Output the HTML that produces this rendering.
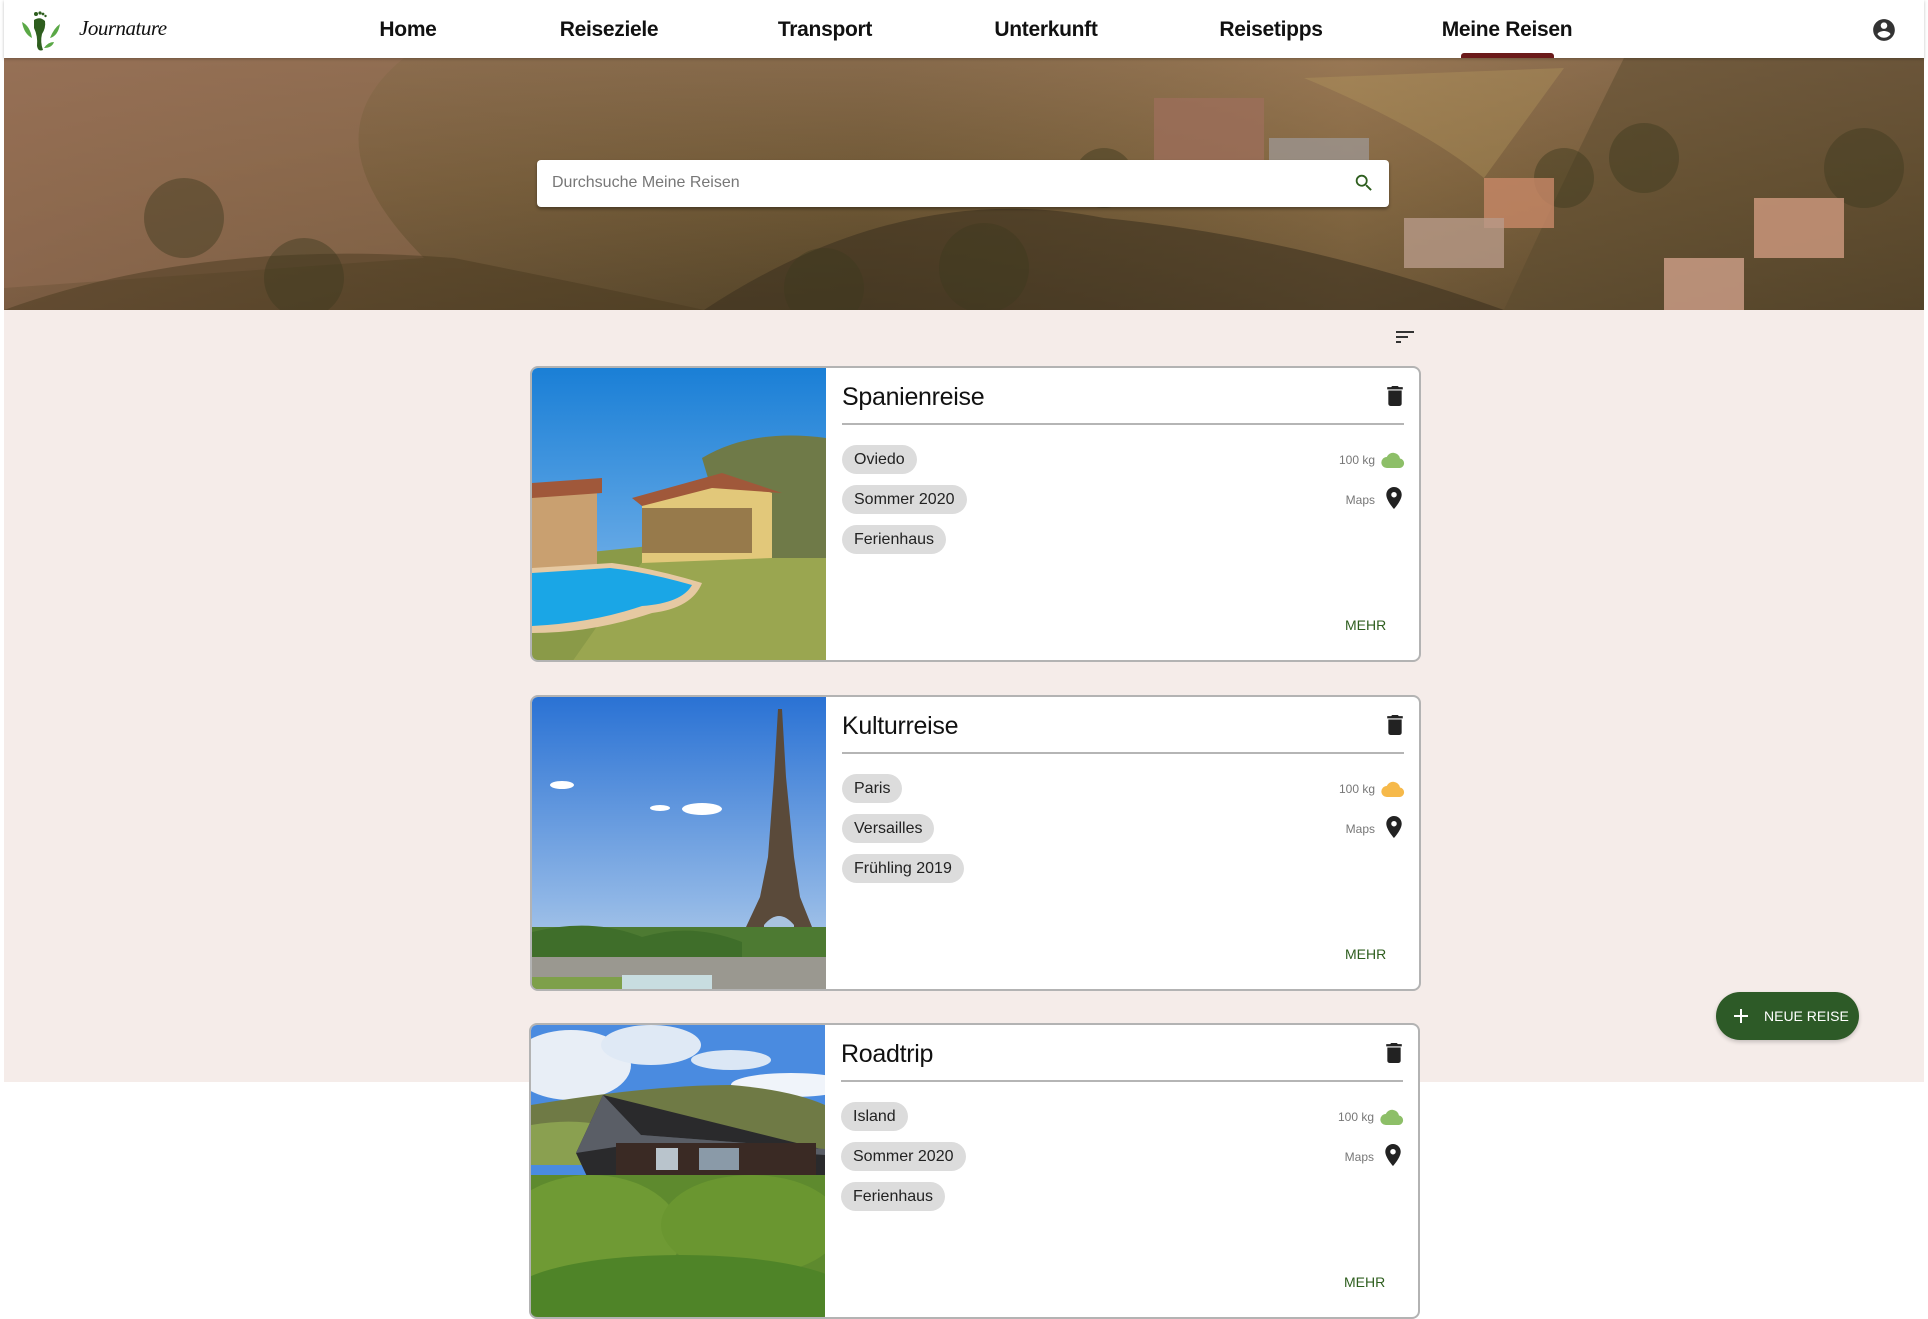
<!DOCTYPE html>
<html><head><meta charset="utf-8">
<style>
*{box-sizing:border-box;margin:0;padding:0}
body{width:1928px;height:1318px;overflow:hidden;background:#fff;font-family:"Liberation Sans",sans-serif;position:relative}
.nav{position:absolute;left:4px;top:0;width:1920px;height:58px;background:#fff;box-shadow:0 1px 3px rgba(0,0,0,.25);z-index:3}
.nav a{position:absolute;top:18px;font-size:21px;color:#111;transform:translateX(-50%);white-space:nowrap;font-weight:bold;letter-spacing:-.3px}
.hero{position:absolute;left:4px;top:58px;width:1920px;height:252px;overflow:hidden}
.beige{position:absolute;left:4px;top:310px;width:1920px;height:772px;background:#f5ece9}
.search{position:absolute;left:537px;top:160px;width:852px;height:47px;background:#fff;border-radius:4px;box-shadow:0 2px 3px rgba(0,0,0,.35);z-index:2}
.search span{position:absolute;left:15px;top:14px;font-size:16px;color:#777}
.card{position:absolute;width:891px;height:296px;border:2px solid #b3b3b3;border-radius:8px;background:#fff;overflow:hidden;z-index:2}
.card .img{position:absolute;left:0;top:0;width:294px;height:294px;overflow:hidden}
.card h2{position:absolute;left:310px;top:15px;font-size:25px;font-weight:400;color:#111;letter-spacing:-.3px}
.card .line{position:absolute;left:310px;top:55px;width:562px;height:2px;background:#b5b5b5}
.chip{position:absolute;left:310px;height:29px;line-height:29px;padding:0 12px;background:#dcdcdc;border-radius:15px;font-size:16px;color:#222}
.rt{position:absolute;right:44px;font-size:12px;color:#777}
.ic{position:absolute;right:14px}
.mehr{position:absolute;left:813px;top:249px;font-size:14px;color:#2e5e1e}
.fab{position:absolute;left:1716px;top:992px;width:143px;height:48px;border-radius:24px;background:#2d5a27;color:#fff;font-size:14px;z-index:2;box-shadow:0 2px 4px rgba(0,0,0,.2)}
</style></head><body>
<div class="nav">
 <svg style="position:absolute;left:16px;top:10px" width="44" height="42" viewBox="0 0 44 42">
  <path d="M2 12 Q10 16 12 28 Q4 24 2 12Z" fill="#5aa846"/>
  <path d="M40 14 Q34 18 30 28 Q38 26 40 14Z" fill="#5aa846"/>
  <path d="M34 32 Q28 32 24 38 Q32 38 34 32Z" fill="#5aa846"/>
  <path d="M14 10 Q20 6 25 11 Q26 18 22 24 Q20 32 23 40 Q18 42 17 36 Q18 26 14 18Z" fill="#2e5e1e"/>
  <circle cx="16" cy="4" r="2" fill="#2e5e1e"/><circle cx="20" cy="3" r="1.6" fill="#2e5e1e"/><circle cx="23" cy="4" r="1.4" fill="#2e5e1e"/><circle cx="25.5" cy="6" r="1.2" fill="#2e5e1e"/>
 </svg>
 <div style="position:absolute;left:75px;top:16px;font-family:'Liberation Serif',serif;font-style:italic;font-size:21px;color:#111;letter-spacing:-.5px">Journature</div>
 <a style="left:404px">Home</a>
 <a style="left:605px">Reiseziele</a>
 <a style="left:821px">Transport</a>
 <a style="left:1042px">Unterkunft</a>
 <a style="left:1267px">Reisetipps</a>
 <a style="left:1503px">Meine Reisen</a>
 <div style="position:absolute;left:1457px;top:53px;width:93px;height:5px;background:#6b1a1a;border-radius:3px 3px 0 0"></div>
 <svg style="position:absolute;left:1867px;top:17px" width="26" height="26" viewBox="0 0 24 24"><path fill="#333" d="M12 2C6.48 2 2 6.48 2 12s4.48 10 10 10 10-4.48 10-10S17.52 2 12 2zm0 3c1.66 0 3 1.340 3 3s-1.34 3-3 3-3-1.34-3-3 1.34-3 3-3zm0 14.2c-2.5 0-4.71-1.28-6-3.220.03-1.99 4-3.08 6-3.08 1.99 0 5.97 1.09 6 3.08-1.29 1.94-3.5 3.22-6 3.22z"/></svg>
</div>

<div class="hero">
<svg width="1920" height="252" viewBox="0 0 1920 252" preserveAspectRatio="none">
 <defs>
  <linearGradient id="hg" x1="0" y1="0" x2="0" y2="1"><stop offset="0" stop-color="#8a6a4e"/><stop offset=".5" stop-color="#6d5433"/><stop offset="1" stop-color="#4a3a22"/></linearGradient>
  <linearGradient id="hl" x1="0" y1="0" x2="1" y2="0"><stop offset="0" stop-color="#9b7358" stop-opacity=".6"/><stop offset=".45" stop-color="#7a6a40" stop-opacity=".2"/><stop offset=".7" stop-color="#b39060" stop-opacity=".35"/><stop offset="1" stop-color="#5a4a30" stop-opacity=".3"/></linearGradient>
 </defs>
 <rect width="1920" height="252" fill="url(#hg)"/>
 <rect width="1920" height="252" fill="url(#hl)"/>
 <path d="M0 0 L400 0 Q300 80 420 200 L0 230Z" fill="#9a7258" opacity=".45"/>
 <path d="M1620 0 L1920 0 L1920 252 L1500 252 Q1560 120 1620 0Z" fill="#5a4a2e" opacity=".5"/>
 <path d="M700 252 Q900 120 1100 160 Q1300 180 1500 252Z" fill="#3d3220" opacity=".6"/>
 <path d="M0 252 Q200 180 450 200 Q600 230 700 252Z" fill="#4a3a20" opacity=".5"/>
 <path d="M1300 20 Q1420 70 1480 120 L1560 10Z" fill="#b79a5e" opacity=".35"/>
 <g fill="#3e3a1e" opacity=".45">
  <circle cx="1560" cy="120" r="30"/><circle cx="1640" cy="100" r="35"/><circle cx="1860" cy="110" r="40"/><circle cx="1100" cy="120" r="30"/><circle cx="820" cy="230" r="40"/><circle cx="980" cy="210" r="45"/><circle cx="180" cy="160" r="40"/><circle cx="300" cy="220" r="40"/>
 </g>
 <rect x="1150" y="40" width="110" height="70" fill="#9c6e5a" opacity=".8"/>
 <rect x="1265" y="80" width="100" height="60" fill="#9c9590" opacity=".8"/>
 <rect x="1480" y="120" width="70" height="50" fill="#c88868" opacity=".8"/>
 <rect x="1400" y="160" width="100" height="50" fill="#b89a88" opacity=".8"/>
 <rect x="1750" y="140" width="90" height="60" fill="#d09a80" opacity=".8"/>
 <rect x="1660" y="200" width="80" height="52" fill="#d0a08a" opacity=".8"/>
</svg>
</div>
<div class="search"><span>Durchsuche Meine Reisen</span>
 <svg style="position:absolute;right:14px;top:12px" width="22" height="22" viewBox="0 0 24 24"><path fill="#2e5e1e" d="M15.5 14h-.79l-.28-.27A6.47 6.47 0 0016 9.5 6.5 6.5 0 109.5 16c1.61 0 3.090-.59 4.23-1.57l.27.28v.79l5 4.99L20.49 19l-4.99-5zm-6 0C7.01 14 5 11.99 5 9.5S7.01 5 9.5 5 14 7.01 14 9.5 11.99 14 9.5 14z"/></svg>
</div>
<div class="beige"></div>
<svg style="position:absolute;left:1394px;top:328px;z-index:2" width="22" height="18" viewBox="0 0 22 18"><rect x="2" y="3" width="18" height="2" fill="#333"/><rect x="2" y="8" width="12" height="2" fill="#333"/><rect x="2" y="13" width="5" height="2" fill="#333"/></svg>

<!-- card 1 -->
<div class="card" style="left:530px;top:366px">
 <div class="img"><svg width="294" height="294" viewBox="0 0 294 294">
  <defs><linearGradient id="s1" x1="0" y1="0" x2="0" y2="1"><stop offset="0" stop-color="#1a7fd6"/><stop offset="1" stop-color="#8fc0ee"/></linearGradient></defs>
  <rect width="294" height="294" fill="url(#s1)"/>
  <path d="M0 190 L294 160 L294 294 L0 294Z" fill="#8a9a48"/>
  <path d="M120 180 L294 170 L294 294 L40 294Z" fill="#9aa650"/>
  <path d="M170 90 Q220 60 294 70 L294 190 L200 190Z" fill="#6f7a48"/>
  <path d="M110 130 L200 110 L240 125 L240 190 L110 195Z" fill="#e2c87a"/>
  <path d="M100 130 L190 105 L250 125 L180 120 L110 138Z" fill="#a0583a"/>
  <rect x="110" y="140" width="110" height="45" fill="#5a3a25" opacity=".55"/>
  <rect x="0" y="115" width="65" height="85" fill="#c9a070"/>
  <path d="M0 115 L70 110 L70 125 L0 130Z" fill="#a0583a"/>
  <path d="M0 200 L80 195 Q120 200 170 215 Q160 240 120 245 Q60 265 0 265Z" fill="#e6c9a2"/>
  <path d="M0 205 L78 200 Q115 204 160 217 Q150 235 110 238 Q60 255 0 258Z" fill="#1aa6e6"/>
 </svg></div>
 <h2>Spanienreise</h2>
 <svg style="position:absolute;left:855px;top:18px" width="16" height="20" viewBox="5 3 14 18"><path fill="#222" d="M6 19c0 1.1.9 2 2 2h8c1.1 0 2-.9 2-2V7H6v12zM19 4h-3.5l-1-1h-5l-1 1H5v2h14V4z"/></svg>
 <div class="line"></div>
 <div class="chip" style="top:77px">Oviedo</div>
 <div class="chip" style="top:117px">Sommer 2020</div>
 <div class="chip" style="top:157px">Ferienhaus</div>
 <div class="rt" style="top:85px">100 kg</div>
 <svg class="ic" style="top:83px" width="24" height="18" viewBox="0 0 24 18"><path fill="#8dbf68" d="M19 7.5A7 7 0 005.7 6 5.5 5.5 0 006 17h13a4.8 4.8 0 000-9.5z"/></svg>
 <div class="rt" style="top:125px">Maps</div>
 <svg class="ic" style="top:119px;right:17px" width="16" height="22" viewBox="5 2 14 20"><path fill="#222" d="M12 2C8.13 2 5 5.13 5 9c0 5.25 7 13 7 13s7-7.75 7-13c0-3.870-3.13-7-7-7zm0 9.5a2.5 2.5 0 010-5 2.5 2.5 0 010 5z"/></svg>
 <div class="mehr">MEHR</div>
</div>

<!-- card 2 -->
<div class="card" style="left:530px;top:695px">
 <div class="img"><svg width="294" height="294" viewBox="0 0 294 294">
  <defs><linearGradient id="s2" x1="0" y1="0" x2="0" y2="1"><stop offset="0" stop-color="#2a72d4"/><stop offset=".7" stop-color="#8fb6e6"/><stop offset="1" stop-color="#c4d6ea"/></linearGradient></defs>
  <rect width="294" height="294" fill="url(#s2)"/>
  <ellipse cx="30" cy="88" rx="12" ry="4" fill="#fff"/><ellipse cx="170" cy="112" rx="20" ry="6" fill="#fff"/><ellipse cx="128" cy="111" rx="10" ry="3" fill="#fff"/>
  <path d="M246 12 L250 12 L254 80 L262 160 L268 200 L284 240 L292 252 L250 252 L246 232 L236 252 L204 252 L214 230 L228 200 L236 160 L242 80Z" fill="#5a4a3a"/>
  <path d="M232 228 Q247 210 262 228 L262 252 L232 252Z" fill="#a9c3e0"/>
  <rect x="0" y="230" width="294" height="64" fill="#4d7a32"/>
  <path d="M0 235 Q60 220 110 240 Q160 225 210 245 L210 294 L0 294Z" fill="#3f6e2a"/>
  <rect x="0" y="260" width="294" height="34" fill="#9a9890"/>
  <rect x="0" y="280" width="90" height="14" fill="#7ea04a"/>
  <rect x="90" y="278" width="90" height="16" fill="#c8dde0"/>
 </svg></div>
 <h2>Kulturreise</h2>
 <svg style="position:absolute;left:855px;top:18px" width="16" height="20" viewBox="5 3 14 18"><path fill="#222" d="M6 19c0 1.1.9 2 2 2h8c1.1 0 2-.9 2-2V7H6v12zM19 4h-3.5l-1-1h-5l-1 1H5v2h14V4z"/></svg>
 <div class="line"></div>
 <div class="chip" style="top:77px">Paris</div>
 <div class="chip" style="top:117px">Versailles</div>
 <div class="chip" style="top:157px">Frühling 2019</div>
 <div class="rt" style="top:85px">100 kg</div>
 <svg class="ic" style="top:83px" width="24" height="18" viewBox="0 0 24 18"><path fill="#f6b94a" d="M19 7.5A7 7 0 005.7 6 5.5 5.5 0 006 17h13a4.8 4.8 0 000-9.5z"/></svg>
 <div class="rt" style="top:125px">Maps</div>
 <svg class="ic" style="top:119px;right:17px" width="16" height="22" viewBox="5 2 14 20"><path fill="#222" d="M12 2C8.13 2 5 5.13 5 9c0 5.25 7 13 7 13s7-7.75 7-13c0-3.870-3.13-7-7-7zm0 9.5a2.5 2.5 0 010-5 2.5 2.5 0 010 5z"/></svg>
 <div class="mehr">MEHR</div>
</div>

<!-- card 3 -->
<div class="card" style="left:529px;top:1023px">
 <div class="img"><svg width="294" height="294" viewBox="0 0 294 294">
  <rect width="294" height="294" fill="#4a8be0"/>
  <ellipse cx="40" cy="40" rx="60" ry="35" fill="#e8eef6"/><ellipse cx="120" cy="20" rx="50" ry="20" fill="#dfe9f5"/><ellipse cx="260" cy="60" rx="60" ry="12" fill="#f0f4fa"/><ellipse cx="200" cy="35" rx="40" ry="10" fill="#dbe7f5"/>
  <path d="M0 80 Q120 60 200 60 Q260 65 294 80 L294 140 L0 140Z" fill="#6f7a45"/>
  <path d="M0 100 Q60 90 100 110 L100 140 L0 140Z" fill="#8aa050"/>
  <path d="M45 128 L72 70 L294 125 L294 160 L60 160Z" fill="#2a2a2c"/>
  <path d="M72 70 L112 112 L294 124 L110 110Z" fill="#4d5158"/>
  <path d="M72 70 L110 110 L294 124 L294 130 L110 118 L45 128Z" fill="#5a5e66"/>
  <rect x="85" y="118" width="200" height="55" fill="#3a2a24"/>
  <rect x="125" y="123" width="22" height="22" fill="#b9c4cc"/><rect x="168" y="123" width="40" height="22" fill="#8a9aa8"/>
  <rect x="0" y="150" width="294" height="144" fill="#5e8a2e"/>
  <ellipse cx="60" cy="210" rx="90" ry="60" fill="#6f9a34"/><ellipse cx="220" cy="200" rx="90" ry="50" fill="#6a9630"/><ellipse cx="150" cy="270" rx="170" ry="40" fill="#4f8428"/>
 </svg></div>
 <h2>Roadtrip</h2>
 <svg style="position:absolute;left:855px;top:18px" width="16" height="20" viewBox="5 3 14 18"><path fill="#222" d="M6 19c0 1.1.9 2 2 2h8c1.1 0 2-.9 2-2V7H6v12zM19 4h-3.5l-1-1h-5l-1 1H5v2h14V4z"/></svg>
 <div class="line"></div>
 <div class="chip" style="top:77px">Island</div>
 <div class="chip" style="top:117px">Sommer 2020</div>
 <div class="chip" style="top:157px">Ferienhaus</div>
 <div class="rt" style="top:85px">100 kg</div>
 <svg class="ic" style="top:83px" width="24" height="18" viewBox="0 0 24 18"><path fill="#8dbf68" d="M19 7.5A7 7 0 005.7 6 5.5 5.5 0 006 17h13a4.8 4.8 0 000-9.5z"/></svg>
 <div class="rt" style="top:125px">Maps</div>
 <svg class="ic" style="top:119px;right:17px" width="16" height="22" viewBox="5 2 14 20"><path fill="#222" d="M12 2C8.13 2 5 5.13 5 9c0 5.25 7 13 7 13s7-7.75 7-13c0-3.870-3.13-7-7-7zm0 9.5a2.5 2.5 0 010-5 2.5 2.5 0 010 5z"/></svg>
 <div class="mehr">MEHR</div>
</div>

<div class="fab">
 <svg style="position:absolute;left:17px;top:16px" width="16" height="16" viewBox="0 0 16 16"><rect x="7" y="1" width="2" height="14" fill="#fff"/><rect x="1" y="7" width="14" height="2" fill="#fff"/></svg>
 <span style="position:absolute;left:48px;top:16px">NEUE REISE</span>
</div>
</body></html>
